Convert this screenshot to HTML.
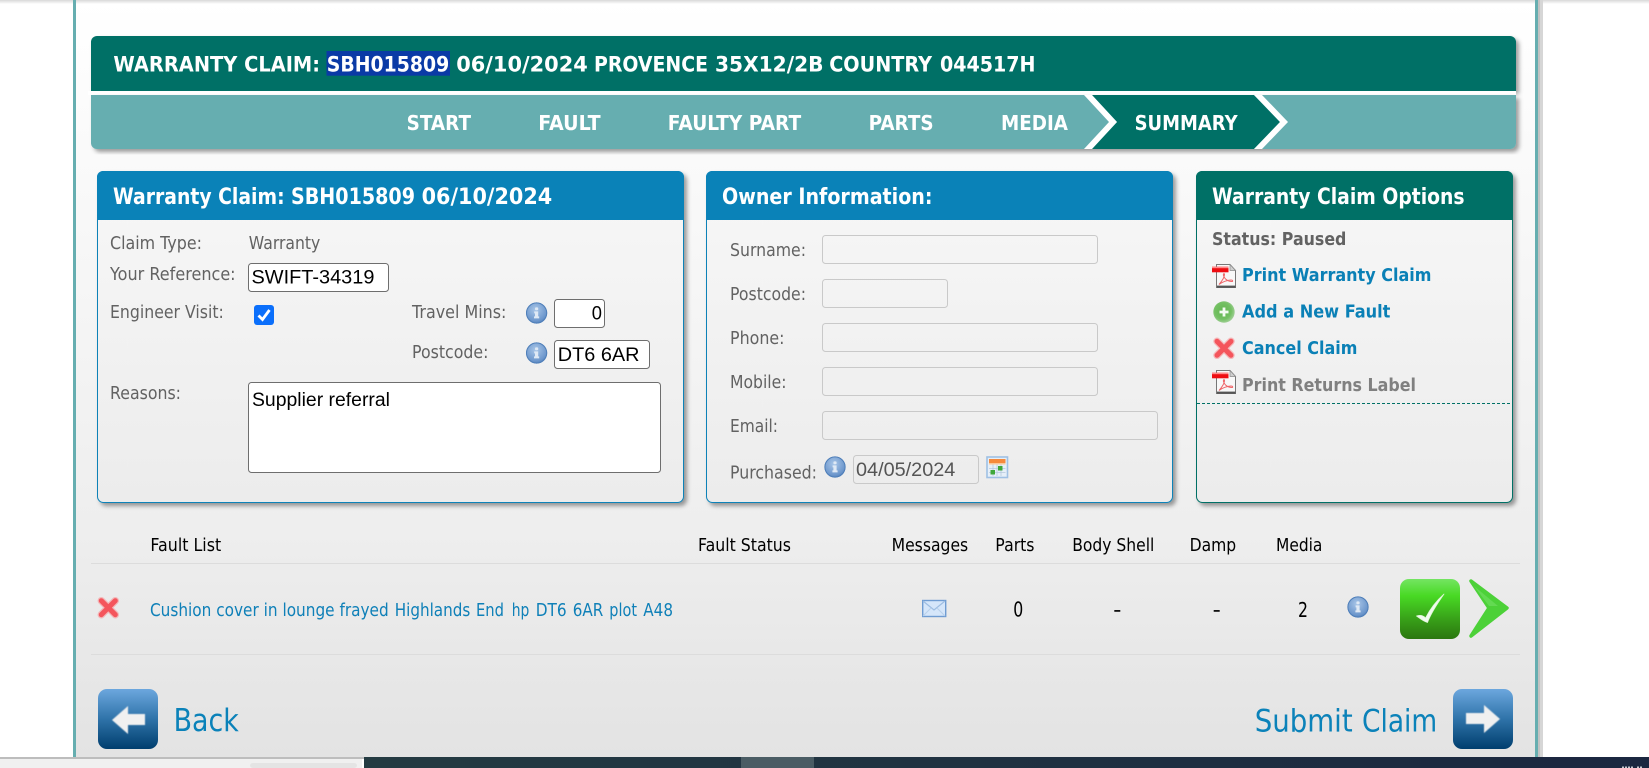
<!DOCTYPE html>
<html lang="en">
<head>
<meta charset="utf-8">
<title>Warranty Claim</title>
<style>
html,body{margin:0;padding:0;background:#fff;width:1649px;height:768px;overflow:hidden}
svg{display:block}
text{font-family:"DejaVu Sans","Liberation Sans",sans-serif;font-size:18px;fill:#626262;white-space:pre}
.b{font-weight:bold}
.w{fill:#fff}
.h1{font-size:21.5px;font-weight:bold;fill:#fff}
.h2{font-size:20.5px;font-weight:bold;fill:#fff}
.p{font-size:22px;font-weight:bold;fill:#fff}
.l{font-weight:bold;fill:#0a80b6}
.k{fill:#000}
.n{fill:#000;font-size:20px}
.a{fill:#0f80b8}
.big{font-size:31px;fill:#0b82b9}
.i{font-family:"Liberation Sans",sans-serif;font-size:19.6px;fill:#000}
.f{fill:#fbfbfb;stroke:#6e6e6e;stroke-width:1}
.d{fill:none;stroke:#c9c9c9;stroke-width:1}
</style>
</head>
<body>
<svg width="1649" height="768" viewBox="0 0 1649 768" xmlns="http://www.w3.org/2000/svg">
<defs>
<linearGradient id="bg" x1="0" y1="0" x2="0" y2="1"><stop offset="0" stop-color="#ffffff"/><stop offset=".2" stop-color="#fafafa"/><stop offset=".7" stop-color="#eeeeee"/><stop offset="1" stop-color="#e3e3e3"/></linearGradient>
<linearGradient id="pb" x1="0" y1="0" x2="0" y2="1"><stop offset="0" stop-color="#f7f7f7"/><stop offset="1" stop-color="#ececec"/></linearGradient>
<linearGradient id="top" x1="0" y1="0" x2="0" y2="1"><stop offset="0" stop-color="#d8d8d8"/><stop offset="1" stop-color="#d8d8d8" stop-opacity="0"/></linearGradient>
<linearGradient id="bar" x1="0" y1="0" x2="1" y2="0"><stop offset="0" stop-color="#243b42"/><stop offset="1" stop-color="#1b2740"/></linearGradient>
<linearGradient id="blue" x1="0" y1="0" x2="0" y2="1"><stop offset="0" stop-color="#6ca7de"/><stop offset=".5" stop-color="#2f73a9"/><stop offset="1" stop-color="#003e6e"/></linearGradient>
<linearGradient id="green" x1="0" y1="0" x2="0" y2="1"><stop offset="0" stop-color="#74e562"/><stop offset=".28" stop-color="#48d924"/><stop offset=".7" stop-color="#379c18"/><stop offset="1" stop-color="#2b770f"/></linearGradient>
<radialGradient id="info" cx=".45" cy=".35" r=".7"><stop offset="0" stop-color="#a9c6e8"/><stop offset=".75" stop-color="#6d97cc"/><stop offset="1" stop-color="#4a79b5"/></radialGradient>
<radialGradient id="plus" cx=".45" cy=".45" r=".6"><stop offset="0" stop-color="#62b650"/><stop offset=".65" stop-color="#74c063"/><stop offset="1" stop-color="#a8d2a0"/></radialGradient>
<filter id="s" x="-5%" y="-5%" width="110%" height="115%"><feDropShadow dx="3" dy="3" stdDeviation="2" flood-color="#000" flood-opacity=".38"/></filter>
<filter id="soft" x="-20%" y="-20%" width="140%" height="140%"><feGaussianBlur stdDeviation=".5"/></filter>
<g id="ic-info">
<circle r="10.6" fill="url(#info)"/>
<circle r="10.1" fill="none" stroke="#4f7fb9" stroke-width="1"/>
<rect x="-1.6" y="-5.6" width="3.2" height="2.8" rx="1" fill="#dfe9f5"/>
<path d="M-2.4-1.6H1.6V3.4H2.6V5.4H-2.6V3.4H-1.6V.4H-2.4Z" fill="#dfe9f5"/>
</g>
<g id="ic-x">
<path d="M-7-7 7 7M7-7-7 7" stroke="#f6a4a6" stroke-width="7.5" stroke-linecap="round" opacity=".7"/>
<path d="M-7-7 7 7M7-7-7 7" stroke="#f4555c" stroke-width="5" stroke-linecap="round"/>
</g>
<g id="ic-pdf">
<path d="M4.5 .5H18L23.5 6.5V23.5H4.5Z" fill="#f8f8f8" stroke="#777" stroke-width="1"/>
<path d="M18 .5V6.5H23.5Z" fill="#cfcfcf" stroke="#8a8a8a" stroke-width=".7"/>
<rect x="5" y="21.6" width="18.5" height="2.2" fill="#555"/>
<rect x="0" y="2.7" width="16.5" height="5.6" fill="#ee0d12"/>
<rect x="0" y="2.7" width="16.5" height="1.5" fill="#ff8a8a"/>
<path d="M7 20.5C10 17 12.5 13 12.5 10.5 12.5 9 11 9.5 11.5 11.5 12.5 15 16 17.5 20 17.5 21 17.5 21 16 19 16 15.5 16 10 18 7 20.5Z" fill="none" stroke="#ee6468" stroke-width="1"/>
</g>
</defs>

<!-- page -->
<rect width="1649" height="768" fill="#fff"/>
<rect x="0" y="0" width="1649" height="4" fill="url(#top)"/>
<rect x="76" y="0" width="1459" height="757" fill="url(#bg)"/>
<rect x="76" y="0" width="1459" height="4" fill="url(#top)"/>
<rect x="1538" y="0" width="5" height="757" fill="#d6d6d6"/>
<rect x="1538" y="0" width="2" height="757" fill="#c2c2c2"/>
<rect x="73" y="0" width="3" height="757" fill="#66aeb0"/>
<rect x="1535" y="0" width="3" height="757" fill="#66aeb0"/>

<!-- title bar -->
<g filter="url(#s)"><path d="M97 36H1510a6 6 0 0 1 6 6V91H91V42a6 6 0 0 1 6-6Z" fill="#007066"/></g>
<rect x="88" y="91" width="1428" height="4" fill="#fff"/>
<rect x="326.5" y="51" width="123.5" height="24.7" fill="#0a3aa6"/>
<text class="h1" x="113.4" y="71.5" textLength="206.6" lengthAdjust="spacingAndGlyphs">WARRANTY CLAIM:</text>
<text class="h1" x="326.8" y="71.5" textLength="122.4" lengthAdjust="spacingAndGlyphs">SBH015809</text>
<text class="h1" x="456.2" y="71.5" textLength="131.6" lengthAdjust="spacingAndGlyphs">06/10/2024</text>
<text class="h1" x="594" y="71.5" textLength="114" lengthAdjust="spacingAndGlyphs">PROVENCE</text>
<text class="h1" x="715" y="71.5" textLength="108.5" lengthAdjust="spacingAndGlyphs">35X12/2B</text>
<text class="h1" x="829.2" y="71.5" textLength="102.8" lengthAdjust="spacingAndGlyphs">COUNTRY</text>
<text class="h1" x="940" y="71.5" textLength="95.5" lengthAdjust="spacingAndGlyphs">044517H</text>

<!-- nav -->
<g filter="url(#s)"><path d="M91 95H1516V143a6 6 0 0 1-6 6H97a6 6 0 0 1-6-6Z" fill="#66aeb0"/></g>
<path d="M1092 95 1117 122 1092 149H1254L1280 122 1254 95Z" fill="#007066"/>
<path d="M1084 95H1092L1117 122 1092 149H1084L1109 122Z" fill="#fff"/>
<path d="M1254 95H1262L1288 122 1262 149H1254L1280 122Z" fill="#fff"/>
<text class="h2" x="406.6" y="130" textLength="64.4" lengthAdjust="spacingAndGlyphs">START</text>
<text class="h2" x="538.2" y="130" textLength="62.4" lengthAdjust="spacingAndGlyphs">FAULT</text>
<text class="h2" x="667.8" y="130" textLength="133.4" lengthAdjust="spacingAndGlyphs">FAULTY PART</text>
<text class="h2" x="868.6" y="130" textLength="65" lengthAdjust="spacingAndGlyphs">PARTS</text>
<text class="h2" x="1001" y="130" textLength="67" lengthAdjust="spacingAndGlyphs">MEDIA</text>
<text class="h2" x="1134.6" y="130" textLength="103" lengthAdjust="spacingAndGlyphs">SUMMARY</text>

<!-- panel 1 -->
<g filter="url(#s)">
<rect x="97.5" y="171.5" width="586" height="331" rx="6" fill="url(#pb)" stroke="#0a82b8"/>
</g>
<path d="M103 171H678a6 6 0 0 1 6 6V220H97V177a6 6 0 0 1 6-6Z" fill="#0a82b8"/>
<text class="p" x="113" y="204" textLength="171.6" lengthAdjust="spacingAndGlyphs">Warranty Claim:</text>
<text class="p" x="291" y="204" textLength="124" lengthAdjust="spacingAndGlyphs">SBH015809</text>
<text class="p" x="421.6" y="204" textLength="130.6" lengthAdjust="spacingAndGlyphs">06/10/2024</text>
<text x="110" y="249" textLength="92" lengthAdjust="spacingAndGlyphs">Claim Type:</text>
<text x="248.8" y="249" textLength="71.5" lengthAdjust="spacingAndGlyphs">Warranty</text>
<text x="110" y="280" textLength="125.6" lengthAdjust="spacingAndGlyphs">Your Reference:</text>
<rect class="f" x="248.5" y="263.5" width="140" height="28" rx="3" style="fill:#fff"/>
<text class="i" x="251.5" y="283.5" textLength="122.9" lengthAdjust="spacingAndGlyphs">SWIFT-34319</text>
<text x="110" y="318" textLength="113.8" lengthAdjust="spacingAndGlyphs">Engineer Visit:</text>
<rect x="254" y="305" width="20" height="20" rx="3" fill="#0b6ffb"/>
<path d="M258.5 315.5 262.5 319.5 269.5 310" fill="none" stroke="#fff" stroke-width="2.8"/>
<text x="412" y="318" textLength="94.4" lengthAdjust="spacingAndGlyphs">Travel Mins:</text>
<use href="#ic-info" x="536.6" y="313"/>
<rect class="f" x="554.5" y="299.5" width="50" height="28" rx="3" style="fill:#fff"/>
<text class="i" x="591.7" y="319.7" textLength="10.2" lengthAdjust="spacingAndGlyphs">0</text>
<text x="412" y="358" textLength="76.4" lengthAdjust="spacingAndGlyphs">Postcode:</text>
<use href="#ic-info" x="536.6" y="353"/>
<rect class="f" x="554.5" y="340.5" width="95" height="28" rx="3" style="fill:#fff"/>
<text class="i" x="557.8" y="361" textLength="81.7" lengthAdjust="spacingAndGlyphs">DT6 6AR</text>
<text x="110" y="399" textLength="71" lengthAdjust="spacingAndGlyphs">Reasons:</text>
<rect class="f" x="248.5" y="382.5" width="412" height="90" rx="3" style="fill:#fff"/>
<text class="i" x="252" y="406" textLength="138" lengthAdjust="spacingAndGlyphs">Supplier referral</text>

<!-- panel 2 -->
<g filter="url(#s)">
<rect x="706.5" y="171.5" width="466" height="331" rx="6" fill="url(#pb)" stroke="#0a82b8"/>
</g>
<path d="M712 171H1167a6 6 0 0 1 6 6V220H706V177a6 6 0 0 1 6-6Z" fill="#0a82b8"/>
<text class="p" x="722" y="204" textLength="210.5" lengthAdjust="spacingAndGlyphs">Owner Information:</text>
<text x="730" y="256" textLength="76" lengthAdjust="spacingAndGlyphs">Surname:</text>
<rect class="d" x="822.5" y="235.5" width="275" height="28" rx="3"/>
<text x="730" y="300" textLength="76" lengthAdjust="spacingAndGlyphs">Postcode:</text>
<rect class="d" x="822.5" y="279.5" width="125" height="28" rx="3"/>
<text x="730" y="344" textLength="54.5" lengthAdjust="spacingAndGlyphs">Phone:</text>
<rect class="d" x="822.5" y="323.5" width="275" height="28" rx="3"/>
<text x="730" y="388" textLength="56.5" lengthAdjust="spacingAndGlyphs">Mobile:</text>
<rect class="d" x="822.5" y="367.5" width="275" height="28" rx="3"/>
<text x="730" y="432" textLength="48" lengthAdjust="spacingAndGlyphs">Email:</text>
<rect class="d" x="822.5" y="411.5" width="335" height="28" rx="3"/>
<text x="730" y="478.7" textLength="87" lengthAdjust="spacingAndGlyphs">Purchased:</text>
<use href="#ic-info" x="835" y="467"/>
<rect class="d" x="853.5" y="455.5" width="125" height="28" rx="3"/>
<text class="i" x="856" y="476" textLength="99.3" lengthAdjust="spacingAndGlyphs" style="fill:#555">04/05/2024</text>
<g>
<rect x="987" y="457" width="20.5" height="20.5" fill="#e6eff8" stroke="#9fc0e4" stroke-width="1.6"/>
<rect x="989" y="459" width="16.5" height="4" fill="#f58a3c"/>
<rect x="989" y="463" width="16.5" height="1.5" fill="#f9c89a"/>
<path d="M989 468.5H1005.5M989 472.5H1005.5M993 464.5V476M997 464.5V476M1001 464.5V476" stroke="#b5c9dd" stroke-width=".8"/>
<rect x="998" y="466" width="4.5" height="4.5" fill="#3fa83a"/>
<rect x="990.5" y="470" width="4.5" height="4.5" fill="#3fa83a"/>
</g>

<!-- panel 3 -->
<g filter="url(#s)">
<rect x="1196.5" y="171.5" width="316" height="331" rx="6" fill="url(#pb)" stroke="#007066"/>
</g>
<path d="M1202 171H1507a6 6 0 0 1 6 6V220H1196V177a6 6 0 0 1 6-6Z" fill="#007066"/>
<text class="p" x="1212" y="204" textLength="252.6" lengthAdjust="spacingAndGlyphs">Warranty Claim Options</text>
<text class="b" x="1212" y="245" textLength="134.4" lengthAdjust="spacingAndGlyphs">Status: Paused</text>
<use href="#ic-pdf" x="1212" y="264"/>
<text class="l" x="1242" y="281" textLength="189.4" lengthAdjust="spacingAndGlyphs">Print Warranty Claim</text>
<circle cx="1224" cy="312" r="10.7" fill="url(#plus)"/>
<path d="M1224 307.5V316.5M1219.5 312H1228.5" stroke="#f4fbf2" stroke-width="2.8"/>
<text class="l" x="1242" y="317.7" textLength="148.4" lengthAdjust="spacingAndGlyphs">Add a New Fault</text>
<use href="#ic-x" x="1224" y="348.3"/>
<text class="l" x="1242" y="354" textLength="115.4" lengthAdjust="spacingAndGlyphs">Cancel Claim</text>
<use href="#ic-pdf" x="1212" y="370"/>
<text class="b" x="1242" y="391" textLength="174" lengthAdjust="spacingAndGlyphs" style="fill:#808080">Print Returns Label</text>
<path d="M1197 403.5H1513" stroke="#007066" stroke-width="1" stroke-dasharray="3 2"/>

<!-- table -->
<text class="k" x="150.4" y="551" textLength="70.8" lengthAdjust="spacingAndGlyphs">Fault List</text>
<text class="k" x="698" y="551" textLength="93" lengthAdjust="spacingAndGlyphs">Fault Status</text>
<text class="k" x="891.6" y="551" textLength="76.6" lengthAdjust="spacingAndGlyphs">Messages</text>
<text class="k" x="995.3" y="551" textLength="39.2" lengthAdjust="spacingAndGlyphs">Parts</text>
<text class="k" x="1072.2" y="551" textLength="82.2" lengthAdjust="spacingAndGlyphs">Body Shell</text>
<text class="k" x="1189.6" y="551" textLength="46.6" lengthAdjust="spacingAndGlyphs">Damp</text>
<text class="k" x="1276" y="551" textLength="46.4" lengthAdjust="spacingAndGlyphs">Media</text>
<rect x="91" y="563" width="1429" height="1" fill="#dcdcdc"/>
<use href="#ic-x" x="108.3" y="607.7"/>
<text class="a" x="150" y="616" textLength="238.7" lengthAdjust="spacingAndGlyphs">Cushion cover in lounge frayed</text>
<text class="a" x="394.7" y="616" textLength="75.6" lengthAdjust="spacingAndGlyphs">Highlands</text>
<text class="a" x="476" y="616" textLength="28" lengthAdjust="spacingAndGlyphs">End</text>
<text class="a" x="511.7" y="616" textLength="17.6" lengthAdjust="spacingAndGlyphs">hp</text>
<text class="a" x="535.7" y="616" textLength="31" lengthAdjust="spacingAndGlyphs">DT6</text>
<text class="a" x="572.7" y="616" textLength="30.6" lengthAdjust="spacingAndGlyphs">6AR</text>
<text class="a" x="609.3" y="616" textLength="27.7" lengthAdjust="spacingAndGlyphs">plot</text>
<text class="a" x="643.3" y="616" textLength="29.7" lengthAdjust="spacingAndGlyphs">A48</text>
<g>
<rect x="922.7" y="600.5" width="23" height="16" fill="#d5e6fa" stroke="#6f9cd2" stroke-width="1.4"/>
<path d="M923 601 934 610 945 601" fill="none" stroke="#9dbde2" stroke-width="1.2"/>
<path d="M923 616 931 608M945 616 937 608" fill="none" stroke="#b8d0ec" stroke-width="1"/>
</g>
<text class="n" x="1013.3" y="616.7" textLength="10" lengthAdjust="spacingAndGlyphs">0</text>
<rect x="1114.3" y="610" width="6" height="1.8" fill="#111"/>
<rect x="1213.7" y="610" width="6" height="1.8" fill="#111"/>
<text class="n" x="1298" y="617" textLength="10" lengthAdjust="spacingAndGlyphs">2</text>
<use href="#ic-info" x="1358" y="607"/>
<rect x="1400" y="579" width="60" height="60" rx="9" fill="url(#green)"/>
<path d="M1416.5 616C1419.5 615 1423 615 1425.5 618 1430 609 1436 601 1444 594 1437 604 1431 613 1427.5 622.5 1423.5 621.5 1420 618.5 1416.5 616Z" fill="#f2fbef" stroke="#dff6d8" stroke-width=".8" stroke-linejoin="round"/>
<path d="M1471 581 1507 608 1471 636 1489 608Z" fill="#4cd138" stroke="#4cd138" stroke-width="3.5" stroke-linejoin="round"/>
<path d="M1474 586 1498 606 1489 606Z" fill="#63da52"/>
<rect x="91" y="654" width="1429" height="1" fill="#dcdcdc"/>

<!-- back / submit -->
<rect x="98" y="689" width="60" height="60" rx="9" fill="url(#blue)"/>
<path d="M112 720 128 706V714H145V725H128V734Z" fill="#f0f0f0" filter="url(#soft)"/>
<text class="big" x="173.6" y="731" textLength="65.2" lengthAdjust="spacingAndGlyphs">Back</text>
<text class="big" x="1254.7" y="731.5" textLength="98" lengthAdjust="spacingAndGlyphs">Submit</text>
<text class="big" x="1362" y="731.5" textLength="75.2" lengthAdjust="spacingAndGlyphs">Claim</text>
<rect x="1453" y="689" width="60" height="60" rx="9" fill="url(#blue)"/>
<path d="M1500 719 1484 705V713H1466V724H1484V733Z" fill="#f0f0f0" filter="url(#soft)"/>

<!-- bottom browser/task bar -->
<rect x="0" y="757" width="364" height="2" fill="#bdbdbd"/>
<rect x="0" y="759" width="362" height="9" fill="#f0f0f0"/>
<rect x="250" y="763" width="107" height="5" rx="3" fill="#e4e4e4"/>
<rect x="362" y="759" width="2" height="9" fill="#fff"/>
<rect x="364" y="757" width="1285" height="11" fill="url(#bar)"/>
<rect x="741" y="757" width="73" height="11" fill="#4a5c64"/>
<path d="M1623 766.5V768M1626 766.5V768M1629 766.5V768M1632 766.5V768M1638 766.5V768M1641 766.5V768" stroke="#fff" stroke-width="1.5"/>
</svg>
</body>
</html>
